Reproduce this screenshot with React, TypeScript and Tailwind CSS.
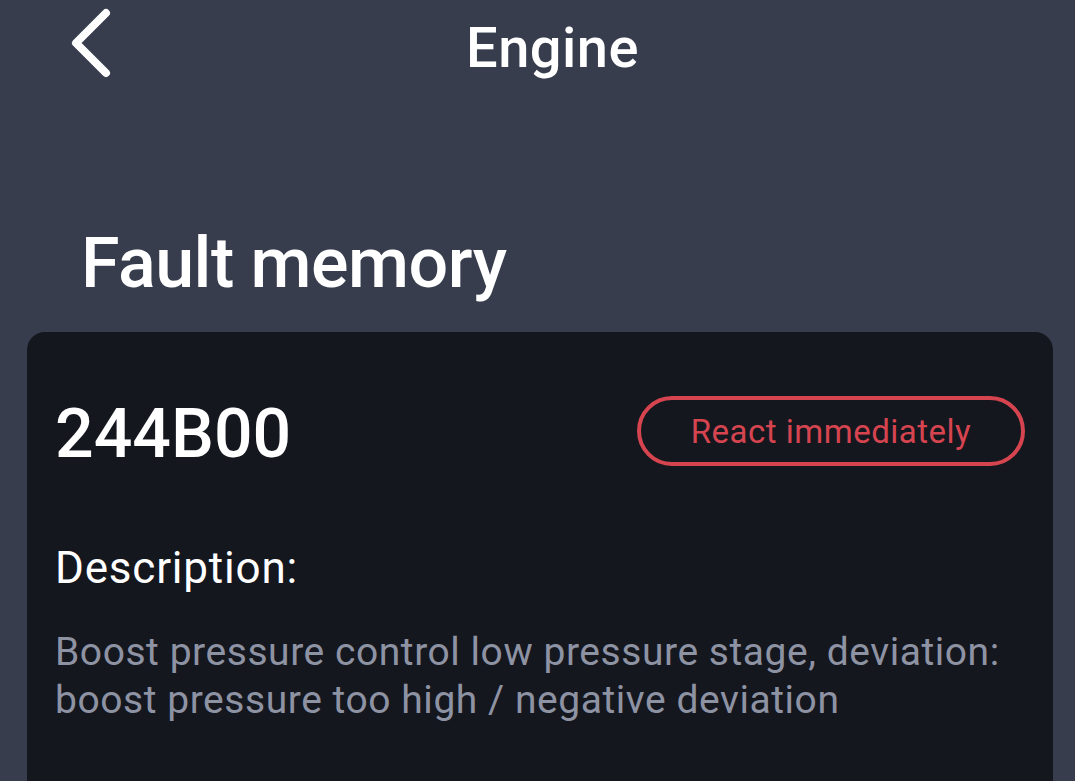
import React from "react";

export default function App() {
  return (
    <div
      className="min-h-screen w-full overflow-hidden bg-[#383d4e] text-white"
      style={{ fontFamily: "Roboto, 'Noto Sans', sans-serif" }}
    >
      {/* Header */}
      <div className="flex items-start pt-[6px] pl-[70px]">
        <svg width="50" height="74" viewBox="0 0 50 74" fill="none" className="shrink-0">
          <polyline
            points="36,7 6,37 36,67"
            stroke="#ffffff"
            strokeWidth="8"
            strokeLinecap="round"
            strokeLinejoin="round"
          />
        </svg>
        <div className="ml-[346px] mt-[14px] text-[56px] font-medium leading-none tracking-[0.5px]">Engine</div>
      </div>

      {/* Section title */}
      <div className="mt-[148px] pl-[81px] text-[70px] font-medium leading-none tracking-[-0.5px]">Fault memory</div>

      {/* Card */}
      <div className="mt-[34px] ml-[27px] w-[1026px] rounded-[18px] bg-[#15171f] pl-[28px] pr-[28px] pt-[64px] pb-[80px]">
        <div className="flex items-start justify-between">
          <div className="mt-[4px] text-[68px] font-medium leading-none">244B00</div>
          <div className="flex h-[70px] w-[388px] items-center justify-center rounded-full border-4 border-[#d6454f] text-[33px] leading-none tracking-[0.5px] text-[#d6454f]">
            React immediately
          </div>
        </div>
        <div className="mt-[78px] text-[44px] leading-none tracking-[0.8px]">Description:</div>
        <p className="mt-[38px] text-[39px] leading-[48px] tracking-[0.55px] text-[#8e93a4]">
          Boost pressure control low pressure stage, deviation: boost pressure too high / negative deviation
        </p>
      </div>
    </div>
  );
}
